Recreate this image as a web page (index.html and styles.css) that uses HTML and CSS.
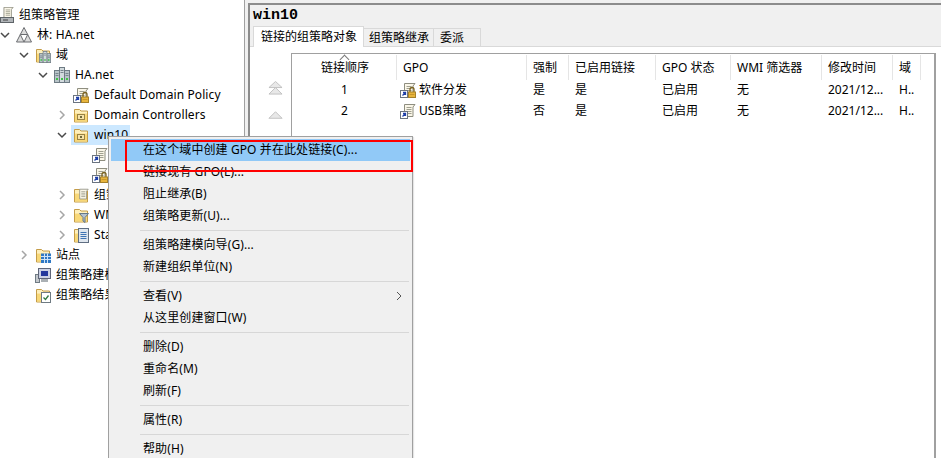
FILE: index.html
```html
<!DOCTYPE html>
<html lang="zh-CN">
<head>
<meta charset="utf-8">
<title>组策略管理</title>
<link rel="stylesheet" href="styles.css">
</head>
<body>
<svg class="defs" width="0" height="0" aria-hidden="true">
  <defs>
    <symbol id="folder" viewBox="0 0 16 16">
      <path d="M1.5 2.5h5l1.500 1.500h6.500v11h-13z" fill="#fdeeb8" stroke="#c49c48"/>
      <path d="M2 6h12v8.500h-12z" fill="#f8d878"/>
      <path d="M2 6h12" stroke="#fff2c8"/>
    </symbol>
    <symbol id="ou" viewBox="0 0 16 16">
      <use href="#folder" width="16" height="16"/>
      <rect x="4.500" y="7.500" width="7" height="5" fill="#f6e2a6" stroke="#9a8344"/>
      <rect x="7" y="9" width="2" height="2" fill="#6f6a3a"/>
    </symbol>
    <symbol id="scroll" viewBox="0 0 16 16">
      <path d="M4.500 1.500h10.500l-2 2.500v9.500h-8.500z" fill="#faf6e8" stroke="#8e8e80"/>
      <path d="M6.500 4.500h5M6.500 6.500h5M6.500 8.500h5M6.500 10.500h5" stroke="#a0a090"/>
    </symbol>
    <symbol id="link" viewBox="0 0 16 16">
      <use href="#scroll" width="16" height="16"/>
      <rect x=".5" y="8.500" width="7" height="7" fill="#fff" stroke="#6b7480"/>
      <path d="M2.500 13.500l3-3M3 10.500h2.500v2.500" fill="none" stroke="#1f3fa8" stroke-width="1.300"/>
    </symbol>
    <symbol id="lock" viewBox="0 0 16 16">
      <use href="#link" width="16" height="16"/>
      <path d="M10 10v-2.500a2 2 0 0 1 4 0v2.500" fill="none" stroke="#7a6220" stroke-width="1.300"/>
      <rect x="8.500" y="10" width="7" height="5.500" fill="#e8b53c" stroke="#a5812a"/>
      <path d="M9.500 12.500h5" stroke="#c8962a"/>
    </symbol>
    <symbol id="server" viewBox="0 0 16 16">
      <rect x=".5" y="3.500" width="5" height="12" fill="#b8c4c8" stroke="#6e7b84"/>
      <rect x="10.500" y="3.500" width="5" height="12" fill="#b8c4c8" stroke="#6e7b84"/>
      <rect x="5.500" y=".5" width="5" height="15" fill="#d2dadd" stroke="#6e7b84"/>
      <path d="M1.500 6.500h3M6.500 3.500h3M11.500 6.500h3M1.500 8.500h3M6.500 5.500h3M11.500 8.500h3" stroke="#78868e"/>
      <path d="M2 12h2M7 12h2M12 12h2" stroke="#3ec444" stroke-width="2"/>
    </symbol>
  </defs>
</svg>

<div class="window">
  <nav class="tree">
    <div class="row root">
      <span class="node">
        <svg class="icon" viewBox="0 0 16 16"><use href="#scroll" x="0" y="-1" width="14" height="14"/><rect x=".5" y="10.500" width="13" height="5" fill="#b0b4b8" stroke="#5e6468"/><path d="M3 13h5" stroke="#444"/></svg>
        <span>组策略管理</span>
      </span>
    </div>
    <div class="row">
      <svg class="chev" viewBox="0 0 10 10"><path d="M1 3l4 4 4-4" class="chev-open"/></svg>
      <span class="node">
        <svg class="icon" viewBox="0 0 16 16"><g fill="#dcdcdc" stroke="#6a6c70"><path d="M8 .5l3.700 7h-7.400z"/><path d="M4.300 7.500l3.700 7.500h-7.500z"/><path d="M11.700 7.500l3.800 7.500h-7.500z"/></g></svg>
        <span>林: HA.net</span>
      </span>
    </div>
    <div class="row d1">
      <svg class="chev" viewBox="0 0 10 10"><path d="M1 3l4 4 4-4" class="chev-open"/></svg>
      <span class="node">
        <svg class="icon" viewBox="0 0 16 16"><use href="#folder" width="16" height="16"/><use href="#server" x="4" y="4" width="12" height="12"/></svg>
        <span>域</span>
      </span>
    </div>
    <div class="row d2">
      <svg class="chev" viewBox="0 0 10 10"><path d="M1 3l4 4 4-4" class="chev-open"/></svg>
      <span class="node">
        <svg class="icon"><use href="#server" width="16" height="16"/></svg>
        <span>HA.net</span>
      </span>
    </div>
    <div class="row d3">
      <span class="chev"></span>
      <span class="node">
        <svg class="icon"><use href="#lock" width="16" height="16"/></svg>
        <span>Default Domain Policy</span>
      </span>
    </div>
    <div class="row d3">
      <svg class="chev" viewBox="0 0 10 10"><path d="M3 1l4 4-4 4" class="chev-closed"/></svg>
      <span class="node">
        <svg class="icon"><use href="#ou" width="16" height="16"/></svg>
        <span>Domain Controllers</span>
      </span>
    </div>
    <div class="row d3">
      <svg class="chev" viewBox="0 0 10 10"><path d="M1 3l4 4 4-4" class="chev-open"/></svg>
      <span class="node selected">
        <svg class="icon"><use href="#ou" width="16" height="16"/></svg>
        <span>win10</span>
      </span>
    </div>
    <div class="row d4">
      <span class="chev"></span>
      <span class="node">
        <svg class="icon"><use href="#link" width="16" height="16"/></svg>
        <span>USB策略</span>
      </span>
    </div>
    <div class="row d4">
      <span class="chev"></span>
      <span class="node">
        <svg class="icon"><use href="#lock" width="16" height="16"/></svg>
        <span>软件分发</span>
      </span>
    </div>
    <div class="row d3">
      <svg class="chev" viewBox="0 0 10 10"><path d="M3 1l4 4-4 4" class="chev-closed"/></svg>
      <span class="node">
        <svg class="icon" viewBox="0 0 16 16"><use href="#folder" width="16" height="16"/><use href="#scroll" x="3" y="1" width="13" height="13"/></svg>
        <span>组策略对象</span>
      </span>
    </div>
    <div class="row d3">
      <svg class="chev" viewBox="0 0 10 10"><path d="M3 1l4 4-4 4" class="chev-closed"/></svg>
      <span class="node">
        <svg class="icon" viewBox="0 0 16 16"><use href="#folder" width="16" height="16"/><path d="M6.500 6.500h9l-3.500 4v5l-2-1.500v-3.500z" fill="#b4c2d0" stroke="#667888"/></svg>
        <span>WMI 筛选器</span>
      </span>
    </div>
    <div class="row d3">
      <svg class="chev" viewBox="0 0 10 10"><path d="M3 1l4 4-4 4" class="chev-closed"/></svg>
      <span class="node">
        <svg class="icon" viewBox="0 0 16 16"><use href="#folder" width="16" height="16"/><rect x="5.500" y="1.500" width="10" height="14" fill="#dfe6ee" stroke="#5f6e82"/><path d="M7.500 5.500h6M7.500 7.500h6M7.500 9.500h6M7.500 11.500h6" stroke="#3f74b4"/></svg>
        <span>Starter GPO</span>
      </span>
    </div>
    <div class="row d1">
      <svg class="chev" viewBox="0 0 10 10"><path d="M3 1l4 4-4 4" class="chev-closed"/></svg>
      <span class="node">
        <svg class="icon" viewBox="0 0 16 16"><use href="#folder" width="16" height="16"/><path d="M6 6.500h10v9.500h-10z" fill="#2f78c4"/><path d="M6 9.500h10M6 12.500h10M9.500 6.500v9.500M12.500 6.500v9.500" stroke="#cfe3f6"/></svg>
        <span>站点</span>
      </span>
    </div>
    <div class="row d1">
      <span class="chev"></span>
      <span class="node">
        <svg class="icon" viewBox="0 0 16 16"><rect x=".5" y="7.500" width="4" height="8" fill="#c4c8cc" stroke="#6f7b84"/><rect x="3.500" y="1.500" width="12" height="10" fill="#ccd2e4" stroke="#5f6678"/><rect x="6" y="4" width="7" height="5" fill="#24389c"/><path d="M6 12h7v3h-7z" fill="#aab0b4"/></svg>
        <span>组策略建模</span>
      </span>
    </div>
    <div class="row d1">
      <span class="chev"></span>
      <span class="node">
        <svg class="icon" viewBox="0 0 16 16"><use href="#folder" width="16" height="16"/><rect x="6.500" y="5.500" width="9" height="10" fill="#fff" stroke="#6e7a82"/><path d="M8.500 10.500l2 2 3-4" fill="none" stroke="#2f7a40" stroke-width="1.300"/></svg>
        <span>组策略结果</span>
      </span>
    </div>
  </nav>

  <main class="detail">
    <h1 class="title">win10</h1>
    <div class="tabs">
      <span class="tab active">链接的组策略对象</span>
      <span class="tab tab-wide">组策略继承</span>
      <span class="tab tab-small">委派</span>
    </div>
    <section class="page">
      <div class="arrows">
        <svg class="arrow-double" viewBox="0 0 16 15"><path d="M8 .5l7 6.500H1z" class="tri"/><path d="M8 7l7 7H1z" class="tri"/></svg>
        <svg class="arrow-single" viewBox="0 0 16 8"><path d="M8 .5l7 7H1z" class="tri"/></svg>
      </div>
      <div class="list">
        <div class="grid head">
          <span class="cell center sorted">链接顺序</span>
          <span class="cell">GPO</span>
          <span class="cell">强制</span>
          <span class="cell">已启用链接</span>
          <span class="cell">GPO 状态</span>
          <span class="cell">WMI 筛选器</span>
          <span class="cell">修改时间</span>
          <span class="cell">域</span>
        </div>
        <div class="grid item">
          <span class="cell center">1</span>
          <span class="cell gpo"><svg class="icon"><use href="#lock" width="16" height="16"/></svg>软件分发</span>
          <span class="cell">是</span>
          <span class="cell">是</span>
          <span class="cell">已启用</span>
          <span class="cell">无</span>
          <span class="cell">2021/12...</span>
          <span class="cell">H..</span>
        </div>
        <div class="grid item">
          <span class="cell center">2</span>
          <span class="cell gpo"><svg class="icon"><use href="#link" width="16" height="16"/></svg>USB策略</span>
          <span class="cell">否</span>
          <span class="cell">是</span>
          <span class="cell">已启用</span>
          <span class="cell">无</span>
          <span class="cell">2021/12...</span>
          <span class="cell">H..</span>
        </div>
      </div>
    </section>
  </main>
</div>

<div class="menu">
  <div class="menu-item hot">在这个域中创建 GPO 并在此处链接(C)...</div>
  <div class="menu-item">链接现有 GPO(L)...</div>
  <div class="menu-item">阻止继承(B)</div>
  <div class="menu-item">组策略更新(U)...</div>
  <div class="menu-sep"></div>
  <div class="menu-item">组策略建模向导(G)...</div>
  <div class="menu-item">新建组织单位(N)</div>
  <div class="menu-sep"></div>
  <div class="menu-item has-sub">查看(V)<svg class="sub" viewBox="0 0 6 10"><path d="M1 1l4 4-4 4"/></svg></div>
  <div class="menu-item">从这里创建窗口(W)</div>
  <div class="menu-sep"></div>
  <div class="menu-item">删除(D)</div>
  <div class="menu-item">重命名(M)</div>
  <div class="menu-item">刷新(F)</div>
  <div class="menu-sep"></div>
  <div class="menu-item">属性(R)</div>
  <div class="menu-sep"></div>
  <div class="menu-item">帮助(H)</div>
</div>
<div class="callout"></div>
</body>
</html>
```

FILE: styles.css
```css
* { box-sizing: border-box; }
html, body { margin: 0; height: 100%; overflow: hidden; }
body {
  background: #f0f0f0;
  color: #000;
  font: 12px/20px "Noto Sans", "Noto Sans CJK SC", sans-serif;
}
.defs { position: absolute; }
.window { display: flex; height: 458px; }

.tree {
  width: 245px;
  padding-top: 5px;
  background: #fff;
  border-right: 1px solid #a0a0a0;
  flex: none;
  letter-spacing: .1px;
}
.row { display: flex; align-items: center; height: 20px; white-space: nowrap; }
.d1 { padding-left: 19px; }
.d2 { padding-left: 38px; }
.d3 { padding-left: 57px; }
.d4 { padding-left: 76px; }
.chev { width: 10px; height: 10px; margin-right: 4px; flex: none; }
.chev-open { fill: none; stroke: #4a4a4a; stroke-width: 1.5; }
.chev-closed { fill: none; stroke: #a6a6a6; stroke-width: 1.5; }
.node { display: flex; align-items: center; gap: 5px; height: 20px; padding: 0 2px; }
.root .node { padding: 0; gap: 3px; }
.selected { background: #cce8ff; }
.icon { width: 16px; height: 16px; flex: none; }

.detail {
  flex: 1;
  min-width: 0;
  margin: 3px 0 0 3px;
  border-top: 2px solid #8c8c8c;
  border-left: 2px solid #8c8c8c;
  display: flex;
  flex-direction: column;
}
.title {
  margin: 0;
  padding: 3px 0 0 3px;
  font: bold 15px/16px "Liberation Mono", monospace;
}
.tabs { display: flex; align-items: flex-end; height: 22px; padding-left: 3px; }
.tab {
  height: 18px;
  line-height: 18px;
  padding: 0 5px;
  background: #f0f0f0;
  border: 1px solid #d9d9d9;
  border-bottom: 0;
  border-left: 0;
  white-space: nowrap;
}
.tab.active {
  height: 21px;
  width: 111px;
  padding: 0 7px;
  line-height: 19px;
  background: #fff;
  border-left: 1px solid #d9d9d9;
  margin-bottom: -1px;
  position: relative;
}
.tab-wide { width: 70px; }
.tab-small { width: 47px; padding-left: 6px; }

.page {
  flex: 1;
  display: flex;
  background: #fff;
  border-top: 1px solid #d9d9d9;
  padding: 6px 5px 0 0;
}
.arrows {
  width: 41px;
  flex: none;
  padding: 28px 0 0 18px;
  display: flex;
  flex-direction: column;
  gap: 16px;
}
.arrow-double { width: 15px; height: 14px; }
.arrow-single { width: 15px; height: 8px; }
.tri { fill: #e8e8e8; stroke: #c0c0c0; }

.list { flex: 1; border: 1px solid #a0a0a0; border-bottom: 0; border-right: 2px solid #a0a0a0; padding-top: 1px; }
.grid {
  display: grid;
  grid-template-columns: 105px 130px 42px 87px 75px 91px 71px 28px;
  width: 629px;
}
.head { height: 25px; line-height: 25px; }
.head .cell { border-right: 1px solid #e5e5e5; }
.item { height: 21px; line-height: 19px; }
.cell { padding-left: 6px; white-space: nowrap; overflow: hidden; }
.center { padding-left: 0; text-align: center; }
.sorted { padding-left: 2px; position: relative; overflow: visible; }
.sorted::after {
  content: "";
  position: absolute;
  top: 1px;
  left: 49px;
  width: 6px;
  height: 6px;
  border-top: 1px solid #7a7a7a;
  border-left: 1px solid #7a7a7a;
  transform: rotate(45deg);
}
.gpo { display: flex; align-items: center; gap: 3px; height: 19px; padding-left: 3px; }

.menu {
  position: absolute;
  left: 108px;
  top: 136px;
  width: 305px;
  height: 330px;
  padding: 2px 2px 3px;
  background: #f0f0f0;
  border: 1px solid #a0a0a0;
  box-shadow: 1px 1px 1px rgba(0,0,0,.1);
  letter-spacing: .1px;
}
.menu-item {
  height: 22px;
  line-height: 22px;
  padding-left: 32px;
  white-space: nowrap;
  position: relative;
}
.hot { background: #91c9f7; }
.menu-sep { height: 7px; padding-top: 3px; margin-left: 29px; }
.menu-sep::before { content: ""; display: block; height: 1px; background: #d7d7d7; margin-right: 1px; }
.sub { position: absolute; right: 8px; top: 6px; width: 6px; height: 10px; fill: none; stroke: #555; }
.callout {
  position: absolute;
  left: 125px;
  top: 140px;
  width: 288px;
  height: 32px;
  border: 2px solid #f00;
}
```
